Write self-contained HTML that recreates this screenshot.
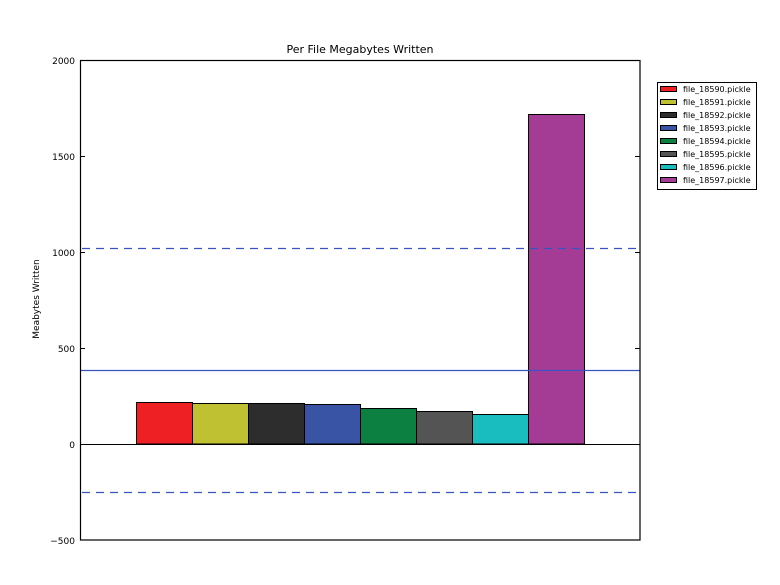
<!DOCTYPE html>
<html><head><meta charset="utf-8"><style>
html,body{margin:0;padding:0;background:#fff;}
svg text{font-family:"DejaVu Sans","Liberation Sans",sans-serif;}
</style></head><body>
<svg width="780" height="580" viewBox="0 0 780 580" xmlns="http://www.w3.org/2000/svg">
<rect width="780" height="580" fill="#fff"/>
<text x="360" y="53" font-size="11" text-anchor="middle">Per File Megabytes Written</text>
<g stroke="#000" stroke-width="1">
<rect x="136.5" y="402.5" width="56" height="41.5" fill="#ee2024"/>
<rect x="192.5" y="403.5" width="56" height="40.5" fill="#bfc032"/>
<rect x="248.5" y="403.5" width="56" height="40.5" fill="#2d2d2d"/>
<rect x="304.5" y="404.5" width="56" height="39.5" fill="#3953a5"/>
<rect x="360.5" y="408.5" width="56" height="35.5" fill="#0b8040"/>
<rect x="416.5" y="411.5" width="56" height="32.5" fill="#545454"/>
<rect x="472.5" y="414.5" width="56" height="29.5" fill="#1abdbf"/>
<rect x="528.5" y="114.5" width="56" height="329.5" fill="#a43c96"/>
</g>
<line x1="80" y1="444.5" x2="640" y2="444.5" stroke="#000" stroke-width="1"/>
<line x1="80" y1="248.5" x2="640" y2="248.5" stroke="#3953c0" stroke-width="1.3" stroke-dasharray="8,6" stroke-dashoffset="-2"/>
<line x1="80" y1="492.5" x2="640" y2="492.5" stroke="#3953c0" stroke-width="1.3" stroke-dasharray="8,6" stroke-dashoffset="-2"/>
<line x1="80" y1="370.5" x2="640" y2="370.5" stroke="#3953c0" stroke-width="1.3"/>
<rect x="80.5" y="60.5" width="559.5" height="479.5" fill="none" stroke="#000" stroke-width="1.2"/>
<g stroke="#000" stroke-width="1">
<line x1="80" y1="156.5" x2="85" y2="156.5"/><line x1="635" y1="156.5" x2="640" y2="156.5"/>
<line x1="80" y1="252.5" x2="85" y2="252.5"/><line x1="635" y1="252.5" x2="640" y2="252.5"/>
<line x1="80" y1="348.5" x2="85" y2="348.5"/><line x1="635" y1="348.5" x2="640" y2="348.5"/>
<line x1="635" y1="444.5" x2="640" y2="444.5"/>
</g>
<g font-size="9" text-anchor="end">
<text x="75" y="64">2000</text>
<text x="75" y="160">1500</text>
<text x="75" y="256">1000</text>
<text x="75" y="352">500</text>
<text x="75" y="448">0</text>
<text x="75" y="544">−500</text>
</g>
<text transform="translate(39,299) rotate(-90)" font-size="9" text-anchor="middle">Meabytes Written</text>
<rect x="657.5" y="82.5" width="99" height="107" fill="#fff" stroke="#000" stroke-width="1"/>
<g stroke="#000" stroke-width="1">
<rect x="660.5" y="86.5" width="16" height="5" fill="#ee2024"/>
<rect x="660.5" y="99.5" width="16" height="5" fill="#bfc032"/>
<rect x="660.5" y="112.5" width="16" height="5" fill="#2d2d2d"/>
<rect x="660.5" y="125.5" width="16" height="5" fill="#3953a5"/>
<rect x="660.5" y="138.5" width="16" height="5" fill="#0b8040"/>
<rect x="660.5" y="151.5" width="16" height="5" fill="#545454"/>
<rect x="660.5" y="164.5" width="16" height="5" fill="#1abdbf"/>
<rect x="660.5" y="177.5" width="16" height="5" fill="#a43c96"/>
</g>
<g font-size="8">
<text x="683" y="92">file_18590.pickle</text>
<text x="683" y="105">file_18591.pickle</text>
<text x="683" y="118">file_18592.pickle</text>
<text x="683" y="131">file_18593.pickle</text>
<text x="683" y="144">file_18594.pickle</text>
<text x="683" y="157">file_18595.pickle</text>
<text x="683" y="170">file_18596.pickle</text>
<text x="683" y="183">file_18597.pickle</text>
</g>
</svg>
</body></html>
